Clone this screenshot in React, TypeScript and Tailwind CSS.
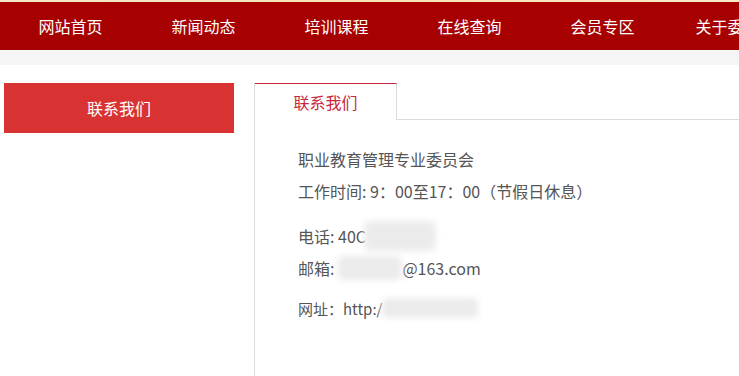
import React from "react";

const navItems = ["网站首页", "新闻动态", "培训课程", "在线查询", "会员专区", "关于委员会"];

const Blur = ({ className }: { className: string }) => (
  <span className={`inline-block align-middle bg-[#ebebeb] blur-[3px] rounded-md ${className}`} />
);

export default function App() {
  return (
    <div className="w-[739px] h-[376px] overflow-hidden bg-white font-['Noto_Sans_CJK_SC','Microsoft_YaHei',sans-serif]">
      {/* top strip */}
      <div className="h-[2px] bg-gradient-to-r from-[#f3e6c8] via-[#f7e3b5] to-[#fbe9c7]" />
      {/* nav */}
      <div className="h-[48px] bg-[#a60000] flex items-center pl-[4px] whitespace-nowrap">
        {navItems.map((item) => (
          <div key={item} className="w-[133px] shrink-0 text-center text-[16px] text-white leading-none">
            {item}
          </div>
        ))}
      </div>
      <div className="h-[15px] bg-[#f5f5f5]" />

      <div className="flex pt-[18px]">
        {/* sidebar */}
        <div className="ml-[4px] w-[230px] shrink-0">
          <div className="h-[50px] bg-[#d93232] flex items-center justify-center text-white text-[16px]">
            联系我们
          </div>
        </div>

        {/* content */}
        <div className="ml-[20px] flex-1 border-l border-[#dcdcdc] h-[300px]">
          <div className="flex h-[37px]">
            <div className="w-[142px] border-t border-t-[#c8283a] border-r border-r-[#dcdcdc] flex items-center justify-center text-[#c8283a] text-[16px]">
              联系我们
            </div>
            <div className="flex-1 border-b border-[#dcdcdc]" />
          </div>

          <div className="pl-[43px] pt-[31px] text-[16px] text-[#555] leading-none">
            <div className="h-[16px]">职业教育管理专业委员会</div>
            <div className="h-[16px] mt-[16px]">工作时间: 9：00至17：00（节假日休息）</div>
            <div className="h-[16px] mt-[29px] flex items-center">
              电话: 40C<Blur className="w-[72px] h-[30px] -ml-[2px]" />
            </div>
            <div className="h-[16px] mt-[16px] flex items-center">
              邮箱:
              <Blur className="w-[64px] h-[24px] ml-[4px]" />
              @163.com
            </div>
            <div className="h-[16px] mt-[24px] flex items-center text-[15px]">
              网址：http:/
              <Blur className="w-[96px] h-[20px]" />
            </div>
          </div>
        </div>
      </div>
    </div>
  );
}
